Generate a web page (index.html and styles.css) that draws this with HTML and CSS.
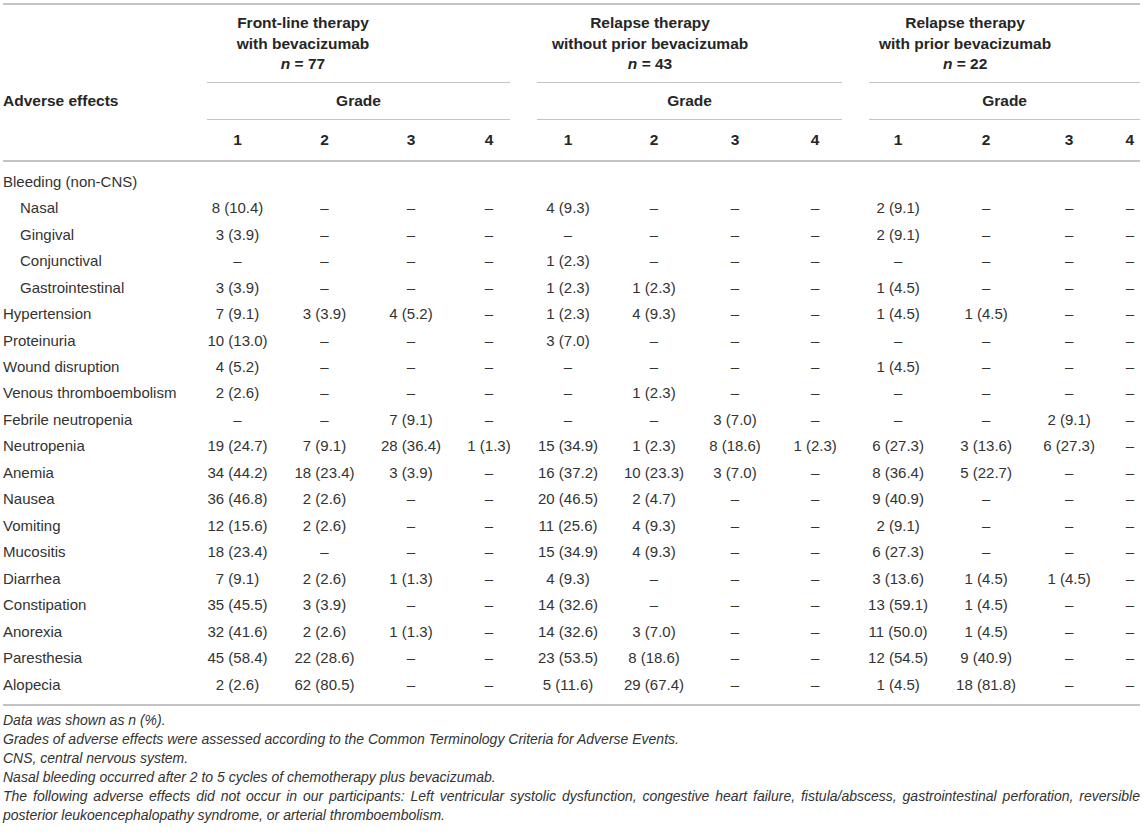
FILE: index.html
```html
<!DOCTYPE html>
<html lang="en">
<head>
    <meta charset="UTF-8">
    <meta name="viewport" content="width=device-width, initial-scale=1.0">
    <title>Adverse effects by therapy group</title>
    <link rel="stylesheet" href="styles.css">
</head>
<body>
    <div class="sheet">
        <table class="ae-table">
            <colgroup>
                <col class="c0"><col class="c1"><col class="c2"><col class="c3"><col class="c4">
                <col class="c5"><col class="c6"><col class="c7"><col class="c8">
                <col class="c9"><col class="c10"><col class="c11"><col class="c12">
            </colgroup>
            <thead>
                <tr class="row-groups">
                    <th></th>
                    <th colspan="4" class="group">
                        <div class="group-line">
                            <div class="group-title title-front">Front-line therapy<br>with bevacizumab<br><i>n</i> = 77</div>
                        </div>
                    </th>
                    <th colspan="4" class="group">
                        <div class="group-line">
                            <div class="group-title title-relapse">Relapse therapy<br>without prior bevacizumab<br><i>n</i> = 43</div>
                        </div>
                    </th>
                    <th colspan="4" class="group">
                        <div class="group-line last">
                            <div class="group-title title-relapse">Relapse therapy<br>with prior bevacizumab<br><i>n</i> = 22</div>
                        </div>
                    </th>
                </tr>
                <tr class="row-grade">
                    <th class="label">Adverse effects</th>
                    <th colspan="4" class="group"><div class="group-line">Grade</div></th>
                    <th colspan="4" class="group"><div class="group-line">Grade</div></th>
                    <th colspan="4" class="group"><div class="group-line last">Grade</div></th>
                </tr>
                <tr class="row-num">
                    <th></th>
                    <th>1</th><th>2</th><th>3</th><th>4</th>
                    <th>1</th><th>2</th><th>3</th><th>4</th>
                    <th>1</th><th>2</th><th>3</th><th class="end">4</th>
                </tr>
            </thead>
            <tbody>
                <tr><td class="label">Bleeding (non-CNS)</td><td></td><td></td><td></td><td></td><td></td><td></td><td></td><td></td><td></td><td></td><td></td><td class="end"></td></tr>
                <tr class="sub"><td class="label">Nasal</td><td>8 (10.4)</td><td>–</td><td>–</td><td>–</td><td>4 (9.3)</td><td>–</td><td>–</td><td>–</td><td>2 (9.1)</td><td>–</td><td>–</td><td class="end">–</td></tr>
                <tr class="sub"><td class="label">Gingival</td><td>3 (3.9)</td><td>–</td><td>–</td><td>–</td><td>–</td><td>–</td><td>–</td><td>–</td><td>2 (9.1)</td><td>–</td><td>–</td><td class="end">–</td></tr>
                <tr class="sub"><td class="label">Conjunctival</td><td>–</td><td>–</td><td>–</td><td>–</td><td>1 (2.3)</td><td>–</td><td>–</td><td>–</td><td>–</td><td>–</td><td>–</td><td class="end">–</td></tr>
                <tr class="sub"><td class="label">Gastrointestinal</td><td>3 (3.9)</td><td>–</td><td>–</td><td>–</td><td>1 (2.3)</td><td>1 (2.3)</td><td>–</td><td>–</td><td>1 (4.5)</td><td>–</td><td>–</td><td class="end">–</td></tr>
                <tr><td class="label">Hypertension</td><td>7 (9.1)</td><td>3 (3.9)</td><td>4 (5.2)</td><td>–</td><td>1 (2.3)</td><td>4 (9.3)</td><td>–</td><td>–</td><td>1 (4.5)</td><td>1 (4.5)</td><td>–</td><td class="end">–</td></tr>
                <tr><td class="label">Proteinuria</td><td>10 (13.0)</td><td>–</td><td>–</td><td>–</td><td>3 (7.0)</td><td>–</td><td>–</td><td>–</td><td>–</td><td>–</td><td>–</td><td class="end">–</td></tr>
                <tr><td class="label">Wound disruption</td><td>4 (5.2)</td><td>–</td><td>–</td><td>–</td><td>–</td><td>–</td><td>–</td><td>–</td><td>1 (4.5)</td><td>–</td><td>–</td><td class="end">–</td></tr>
                <tr><td class="label">Venous thromboembolism</td><td>2 (2.6)</td><td>–</td><td>–</td><td>–</td><td>–</td><td>1 (2.3)</td><td>–</td><td>–</td><td>–</td><td>–</td><td>–</td><td class="end">–</td></tr>
                <tr><td class="label">Febrile neutropenia</td><td>–</td><td>–</td><td>7 (9.1)</td><td>–</td><td>–</td><td>–</td><td>3 (7.0)</td><td>–</td><td>–</td><td>–</td><td>2 (9.1)</td><td class="end">–</td></tr>
                <tr><td class="label">Neutropenia</td><td>19 (24.7)</td><td>7 (9.1)</td><td>28 (36.4)</td><td>1 (1.3)</td><td>15 (34.9)</td><td>1 (2.3)</td><td>8 (18.6)</td><td>1 (2.3)</td><td>6 (27.3)</td><td>3 (13.6)</td><td>6 (27.3)</td><td class="end">–</td></tr>
                <tr><td class="label">Anemia</td><td>34 (44.2)</td><td>18 (23.4)</td><td>3 (3.9)</td><td>–</td><td>16 (37.2)</td><td>10 (23.3)</td><td>3 (7.0)</td><td>–</td><td>8 (36.4)</td><td>5 (22.7)</td><td>–</td><td class="end">–</td></tr>
                <tr><td class="label">Nausea</td><td>36 (46.8)</td><td>2 (2.6)</td><td>–</td><td>–</td><td>20 (46.5)</td><td>2 (4.7)</td><td>–</td><td>–</td><td>9 (40.9)</td><td>–</td><td>–</td><td class="end">–</td></tr>
                <tr><td class="label">Vomiting</td><td>12 (15.6)</td><td>2 (2.6)</td><td>–</td><td>–</td><td>11 (25.6)</td><td>4 (9.3)</td><td>–</td><td>–</td><td>2 (9.1)</td><td>–</td><td>–</td><td class="end">–</td></tr>
                <tr><td class="label">Mucositis</td><td>18 (23.4)</td><td>–</td><td>–</td><td>–</td><td>15 (34.9)</td><td>4 (9.3)</td><td>–</td><td>–</td><td>6 (27.3)</td><td>–</td><td>–</td><td class="end">–</td></tr>
                <tr><td class="label">Diarrhea</td><td>7 (9.1)</td><td>2 (2.6)</td><td>1 (1.3)</td><td>–</td><td>4 (9.3)</td><td>–</td><td>–</td><td>–</td><td>3 (13.6)</td><td>1 (4.5)</td><td>1 (4.5)</td><td class="end">–</td></tr>
                <tr><td class="label">Constipation</td><td>35 (45.5)</td><td>3 (3.9)</td><td>–</td><td>–</td><td>14 (32.6)</td><td>–</td><td>–</td><td>–</td><td>13 (59.1)</td><td>1 (4.5)</td><td>–</td><td class="end">–</td></tr>
                <tr><td class="label">Anorexia</td><td>32 (41.6)</td><td>2 (2.6)</td><td>1 (1.3)</td><td>–</td><td>14 (32.6)</td><td>3 (7.0)</td><td>–</td><td>–</td><td>11 (50.0)</td><td>1 (4.5)</td><td>–</td><td class="end">–</td></tr>
                <tr><td class="label">Paresthesia</td><td>45 (58.4)</td><td>22 (28.6)</td><td>–</td><td>–</td><td>23 (53.5)</td><td>8 (18.6)</td><td>–</td><td>–</td><td>12 (54.5)</td><td>9 (40.9)</td><td>–</td><td class="end">–</td></tr>
                <tr><td class="label">Alopecia</td><td>2 (2.6)</td><td>62 (80.5)</td><td>–</td><td>–</td><td>5 (11.6)</td><td>29 (67.4)</td><td>–</td><td>–</td><td>1 (4.5)</td><td>18 (81.8)</td><td>–</td><td class="end">–</td></tr>
            </tbody>
        </table>

        <div class="notes">
            <p>Data was shown as n (%).</p>
            <p>Grades of adverse effects were assessed according to the Common Terminology Criteria for Adverse Events.</p>
            <p>CNS, central nervous system.</p>
            <p>Nasal bleeding occurred after 2 to 5 cycles of chemotherapy plus bevacizumab.</p>
            <p class="justify">The following adverse effects did not occur in our participants: Left ventricular systolic dysfunction, congestive heart failure, fistula/abscess, gastrointestinal perforation, reversible posterior leukoencephalopathy syndrome, or arterial thromboembolism.</p>
        </div>
    </div>
</body>
</html>
```

FILE: styles.css
```css
body {
    margin: 0;
    padding: 0;
    background: #fff;
    font-family: "Liberation Sans", Arial, sans-serif;
    color: #333;
}

.sheet {
    margin-top: 3px;
    padding: 0 3px;
    width: 1137px;
}

.ae-table {
    width: 1137px;
    table-layout: fixed;
    border-collapse: collapse;
    border-spacing: 0;
    border-top: 2px solid #c4c4c4;
    border-bottom: 2px solid #c4c4c4;
    font-size: 15px;
}

/* column widths, measured from the source table */
.c0 { width: 191px; }
.c1 { width: 87px; }
.c2 { width: 87px; }
.c3 { width: 86px; }
.c4 { width: 70px; }
.c5 { width: 88px; }
.c6 { width: 84px; }
.c7 { width: 78px; }
.c8 { width: 82px; }
.c9 { width: 84px; }
.c10 { width: 92px; }
.c11 { width: 74px; }
.c12 { width: 34px; }

.ae-table th {
    font-size: 15.5px;
    font-weight: bold;
    color: #262626;
    text-align: center;
    padding: 0;
    line-height: 20px;
}

.ae-table th.group {
    vertical-align: bottom;
}

.group-line {
    margin: 0 14px 0 13px;
    border-bottom: 1px solid #c4c4c4;
}

.group-line.last {
    margin-right: 0;
}

.row-groups .group-line {
    padding: 8px 0 7px;
}

.group-title {
    line-height: 20.5px;
}

.title-front {
    margin-right: 111px;
}

.title-relapse {
    margin-right: 79px;
}

.group-title i {
    font-style: italic;
}

.row-grade .group-line {
    padding: 8px 0;
}

.ae-table th.label {
    text-align: left;
}

.row-num th {
    padding: 10px 0 10px;
    border-bottom: 2px solid #c4c4c4;
}

.ae-table .end {
    text-align: right;
    padding-right: 6px;
}

.ae-table td {
    text-align: center;
    padding: 0;
    height: 26.47px;
    line-height: 18px;
    white-space: nowrap;
}

.ae-table td.label {
    text-align: left;
}

.ae-table tr.sub td.label {
    padding-left: 17px;
}

.ae-table tbody tr:first-child td {
    padding-top: 7px;
}

.ae-table tbody tr:last-child td {
    padding-bottom: 6px;
}

.notes {
    margin-top: 5px;
    font-size: 14px;
    font-style: italic;
    line-height: 19px;
}

.notes p {
    margin: 0;
}

.notes .justify {
    text-align: justify;
}
```
